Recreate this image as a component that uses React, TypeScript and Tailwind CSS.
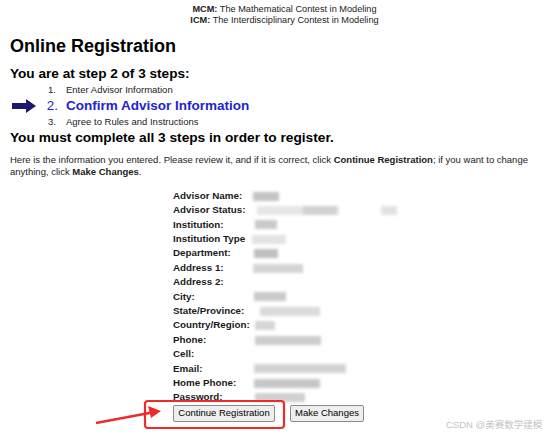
import React from "react";

type Row = { label: string; blocks: [number, number, string][] };

// blurred values: [left offset from value column, width, colour]
const rows: Row[] = [
  { label: "Advisor Name:", blocks: [[0, 26, "#c4c4c4"]] },
  { label: "Advisor Status:", blocks: [[4, 82, "#e6e6e6"], [50, 34, "#d2d2d2"], [128, 16, "#e2e2e2"]] },
  { label: "Institution:", blocks: [[2, 22, "#c9c9c9"]] },
  { label: "Institution Type", blocks: [[-1, 34, "#e3e3e3"]] },
  { label: "Department:", blocks: [[1, 24, "#bfbfbf"]] },
  { label: "Address 1:", blocks: [[0, 50, "#d4d4d4"]] },
  { label: "Address 2:", blocks: [] },
  { label: "City:", blocks: [[1, 32, "#cacaca"]] },
  { label: "State/Province:", blocks: [[7, 60, "#dadada"]] },
  { label: "Country/Region:", blocks: [[2, 20, "#d6d6d6"]] },
  { label: "Phone:", blocks: [[2, 66, "#cdcdcd"]] },
  { label: "Cell:", blocks: [] },
  { label: "Email:", blocks: [[1, 92, "#d3d3d3"]] },
  { label: "Home Phone:", blocks: [[1, 66, "#c6c6c6"]] },
  { label: "Password:", blocks: [[2, 50, "#d0d0d0"]] },
];

const NavyArrow = () => (
  <svg width="24" height="14" viewBox="0 0 24 14" className="ml-[12px] shrink-0">
    <rect x="0" y="4" width="16" height="6" fill="#1d176f" />
    <polygon points="14,0 24,7 14,14" fill="#1d176f" />
  </svg>
);

export default function App() {
  return (
    <div className="relative w-[545px] h-[439px] overflow-hidden bg-white text-black font-['Liberation_Sans',Arial,sans-serif]">
      {/* contest titles */}
      <div className="pt-[4px] pl-[24px] text-center text-[9.2px] leading-[11px] text-[#222]">
        <div>
          <b>MCM:</b> The Mathematical Contest in Modeling
        </div>
        <div>
          <b>ICM:</b> The Interdisciplinary Contest in Modeling
        </div>
      </div>

      <div className="pl-[10px]">
        <h1 className="mt-[9px] h-[22px] leading-[22px] text-[18px] font-bold">Online Registration</h1>
        <h2 className="mt-[9px] h-[16px] leading-[16px] text-[13.6px] font-bold">You are at step 2 of 3 steps:</h2>
      </div>

      <div className="flex flex-col">
        <div className="flex h-[16px] items-center text-[9.5px] text-[#222]">
          <span className="w-[56px] text-right">1.</span>
          <span className="ml-[10px]">Enter Advisor Information</span>
        </div>
        <div className="flex h-[16px] items-center text-[13.5px] text-[#2323cf]">
          <NavyArrow />
          <span className="w-[22px] text-right">2.</span>
          <span className="ml-[8px] font-bold">Confirm Advisor Information</span>
        </div>
        <div className="flex h-[16px] items-center text-[9.5px] text-[#222]">
          <span className="w-[56px] text-right">3.</span>
          <span className="ml-[10px]">Agree to Rules and Instructions</span>
        </div>
      </div>

      <div className="pl-[10px]">
        <h2 className="h-[16px] leading-[16px] text-[13.7px] font-bold">
          You must complete all 3 steps in order to register.
        </h2>
        <p className="mt-[8px] text-[9.5px] leading-[11.5px] text-[#222] whitespace-nowrap">
          Here is the information you entered. Please review it, and if it is correct, click{" "}
          <b>Continue Registration</b>; if you want to change
          <br />
          anything, click <b>Make Changes</b>.
        </p>
      </div>

      {/* entered data */}
      <div className="mt-[12px] ml-[173px] flex flex-col">
        {rows.map((r) => (
          <div key={r.label} className="flex h-[14.4px] items-center">
            <span className="w-[80px] shrink-0 whitespace-nowrap text-[9.8px] font-bold text-[#1a1a1a]">{r.label}</span>
            <div className="relative h-[9px] w-[150px] blur-[1.5px]">
              {r.blocks.map(([l, w, c], i) => (
                <div
                  key={i}
                  className="absolute top-0 h-[9px]"
                  style={{ left: l, width: w, background: c }}
                />
              ))}
            </div>
          </div>
        ))}
      </div>

      <div className="ml-[173px] flex gap-[15px]">
        <button className="h-[17px] w-[102px] rounded-[2px] border border-[#8a8a8a] bg-[#efefef] text-[9.5px] text-black">
          Continue Registration
        </button>
        <button className="h-[17px] w-[74px] rounded-[2px] border border-[#8a8a8a] bg-[#efefef] text-[9.5px] text-black">
          Make Changes
        </button>
      </div>

      {/* red annotation */}
      <svg className="pointer-events-none absolute left-0 top-0" width="545" height="439">
        <rect x="145" y="401" width="139" height="27" rx="3" fill="none" stroke="#ee2b2b" strokeWidth="2.2" />
        <line x1="96" y1="423" x2="152" y2="412.5" stroke="#ee2b2b" strokeWidth="2.4" />
        <polygon points="161,411 148,406 151,418" fill="#ee2b2b" />
      </svg>

      <div className="absolute left-[446px] top-[418px] text-[9.5px] text-[#c4c4c4] font-['Liberation_Sans','Noto_Sans_CJK_SC',sans-serif]">
        CSDN @美赛数学建模
      </div>
    </div>
  );
}
